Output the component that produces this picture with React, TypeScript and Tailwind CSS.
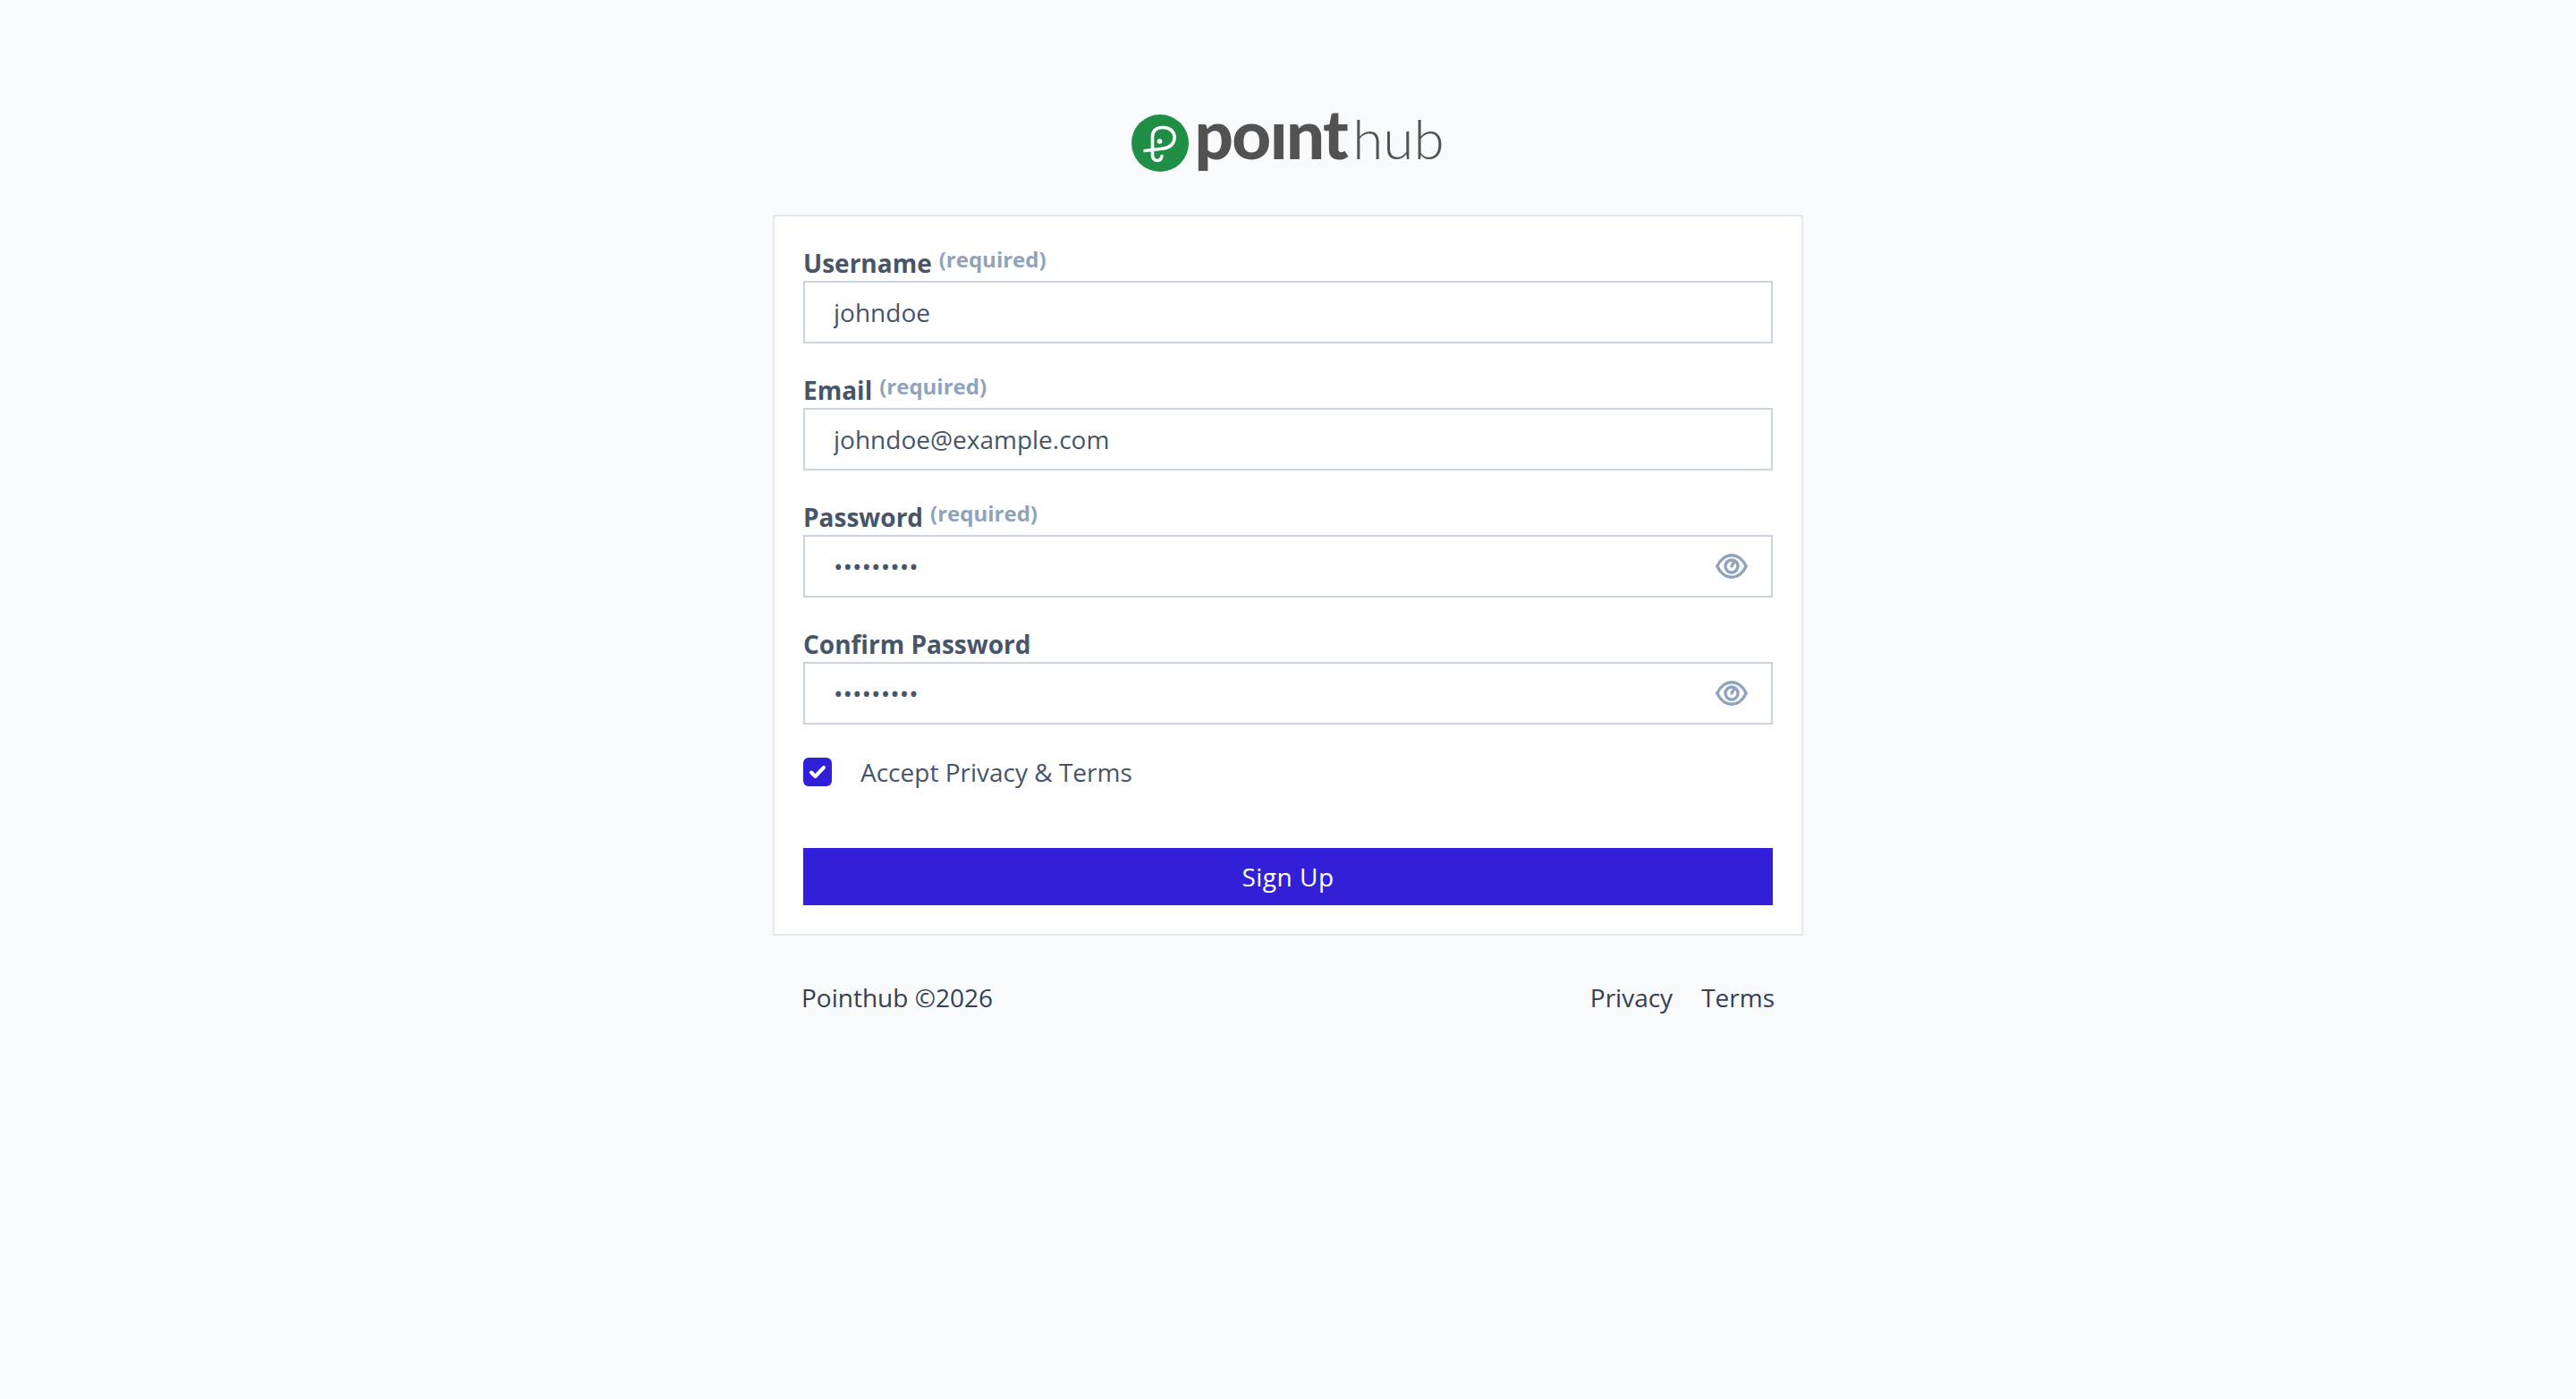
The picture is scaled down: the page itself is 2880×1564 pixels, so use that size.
import { useState } from 'react';

function LogoMark() {
  return (
    <svg width="64" height="64" viewBox="0 0 64 64" className="shrink-0">
      <circle cx="32" cy="32" r="32" fill="#1f8f45" />
      <path
        d="M15 40.5 L36 38 C44 37 49 31 48 24 C47 17.5 41 14 34 14.5 C27 15 23.5 19 23.5 25 L23.5 45 C23.5 49.5 26 51.5 29 51.5 C32 51.5 33.5 49.5 34 46.5"
        fill="none"
        stroke="#fff"
        strokeWidth="3.6"
        strokeLinecap="round"
      />
      <circle cx="31.5" cy="30" r="2.8" fill="#fff" />
    </svg>
  );
}

function EyeIcon() {
  return (
    <svg width="36" height="28" viewBox="0 0 36 28" fill="none" stroke="#8fa3bd" strokeWidth="3.4">
      <path d="M1.8 14 C5 7 11 1.8 18 1.8 C25 1.8 31 7 34.2 14 C31 21 25 26.2 18 26.2 C11 26.2 5 21 1.8 14 Z" strokeLinejoin="round" />
      <circle cx="18" cy="14" r="7" />
      <path d="M18 14 L20.5 9.5" strokeLinecap="round" />
    </svg>
  );
}

function Field({
  label,
  required,
  value,
  type = 'text',
}: {
  label: string;
  required?: boolean;
  value: string;
  type?: string;
}) {
  const [show, setShow] = useState(false);
  const isPassword = type === 'password';

  return (
    <div className="mb-[30px]">
      <label className="flex h-[42px] items-start text-[28px] leading-[44px] font-bold text-[#475569]">
        {label}
        {required && (
          <span className="ml-2 text-[24px] leading-[36px] font-bold text-[#8fa3bd]">(required)</span>
        )}
      </label>
      <div className="relative">
        <input
          readOnly
          type={isPassword && !show ? 'password' : 'text'}
          value={value}
          className="block h-[70px] w-full border-2 border-[#cbd5e1] bg-white px-[32px] text-[28px] text-[#475569] outline-none"
        />
        {isPassword && (
          <button
            type="button"
            onClick={() => setShow((v) => !v)}
            className="absolute top-[21px] right-[28px] flex"
          >
            <EyeIcon />
          </button>
        )}
      </div>
    </div>
  );
}

export default function App() {
  return (
    <div className="flex min-h-[1564px] flex-col items-center bg-[#f8fafc] font-['Open_Sans',sans-serif]">
      <div className="mt-[128px] flex h-[64px] items-center">
        <LogoMark />
        <span className="ml-[6px] font-['Lato',sans-serif] leading-[64px] text-[#525252]">
          <span className="text-[76px] font-black tracking-[-1.5px]">poınt</span>
          <span className="ml-[6px] text-[62px] font-light">hub</span>
        </span>
      </div>

      <form className="mt-[48px] w-[1152px] border-2 border-[#e2e8f0] bg-white px-[32px] pt-[30px] pb-[32px]">
        <Field label="Username" required value="johndoe" />
        <Field label="Email" required value="johndoe@example.com" />
        <Field label="Password" required type="password" value="secret123" />
        <Field label="Confirm Password" type="password" value="secret123" />

        <label className="mt-[33px] flex items-center">
          <span className="flex h-[32px] w-[32px] items-center justify-center rounded-[6px] bg-[#3220d9]">
            <svg width="20" height="16" viewBox="0 0 20 16" fill="none" stroke="#fff" strokeWidth="4" strokeLinecap="round" strokeLinejoin="round">
              <path d="M3 8.5 L7.5 13 L17 3" />
            </svg>
          </span>
          <span className="ml-[32px] text-[28px] leading-[40px] text-[#475569]">Accept Privacy &amp; Terms</span>
        </label>

        <button type="button" className="mt-[65px] block h-[64px] w-full bg-[#3220d9] text-[28px] tracking-[0.5px] text-white">
          Sign Up
        </button>
      </form>

      <div className="mt-[49px] flex w-[1088px] justify-between text-[28px] leading-[40px] text-[#334155]">
        <span>Pointhub ©2026</span>
        <span className="flex gap-[32px]">
          <a href="#">Privacy</a>
          <a href="#">Terms</a>
        </span>
      </div>
    </div>
  );
}
